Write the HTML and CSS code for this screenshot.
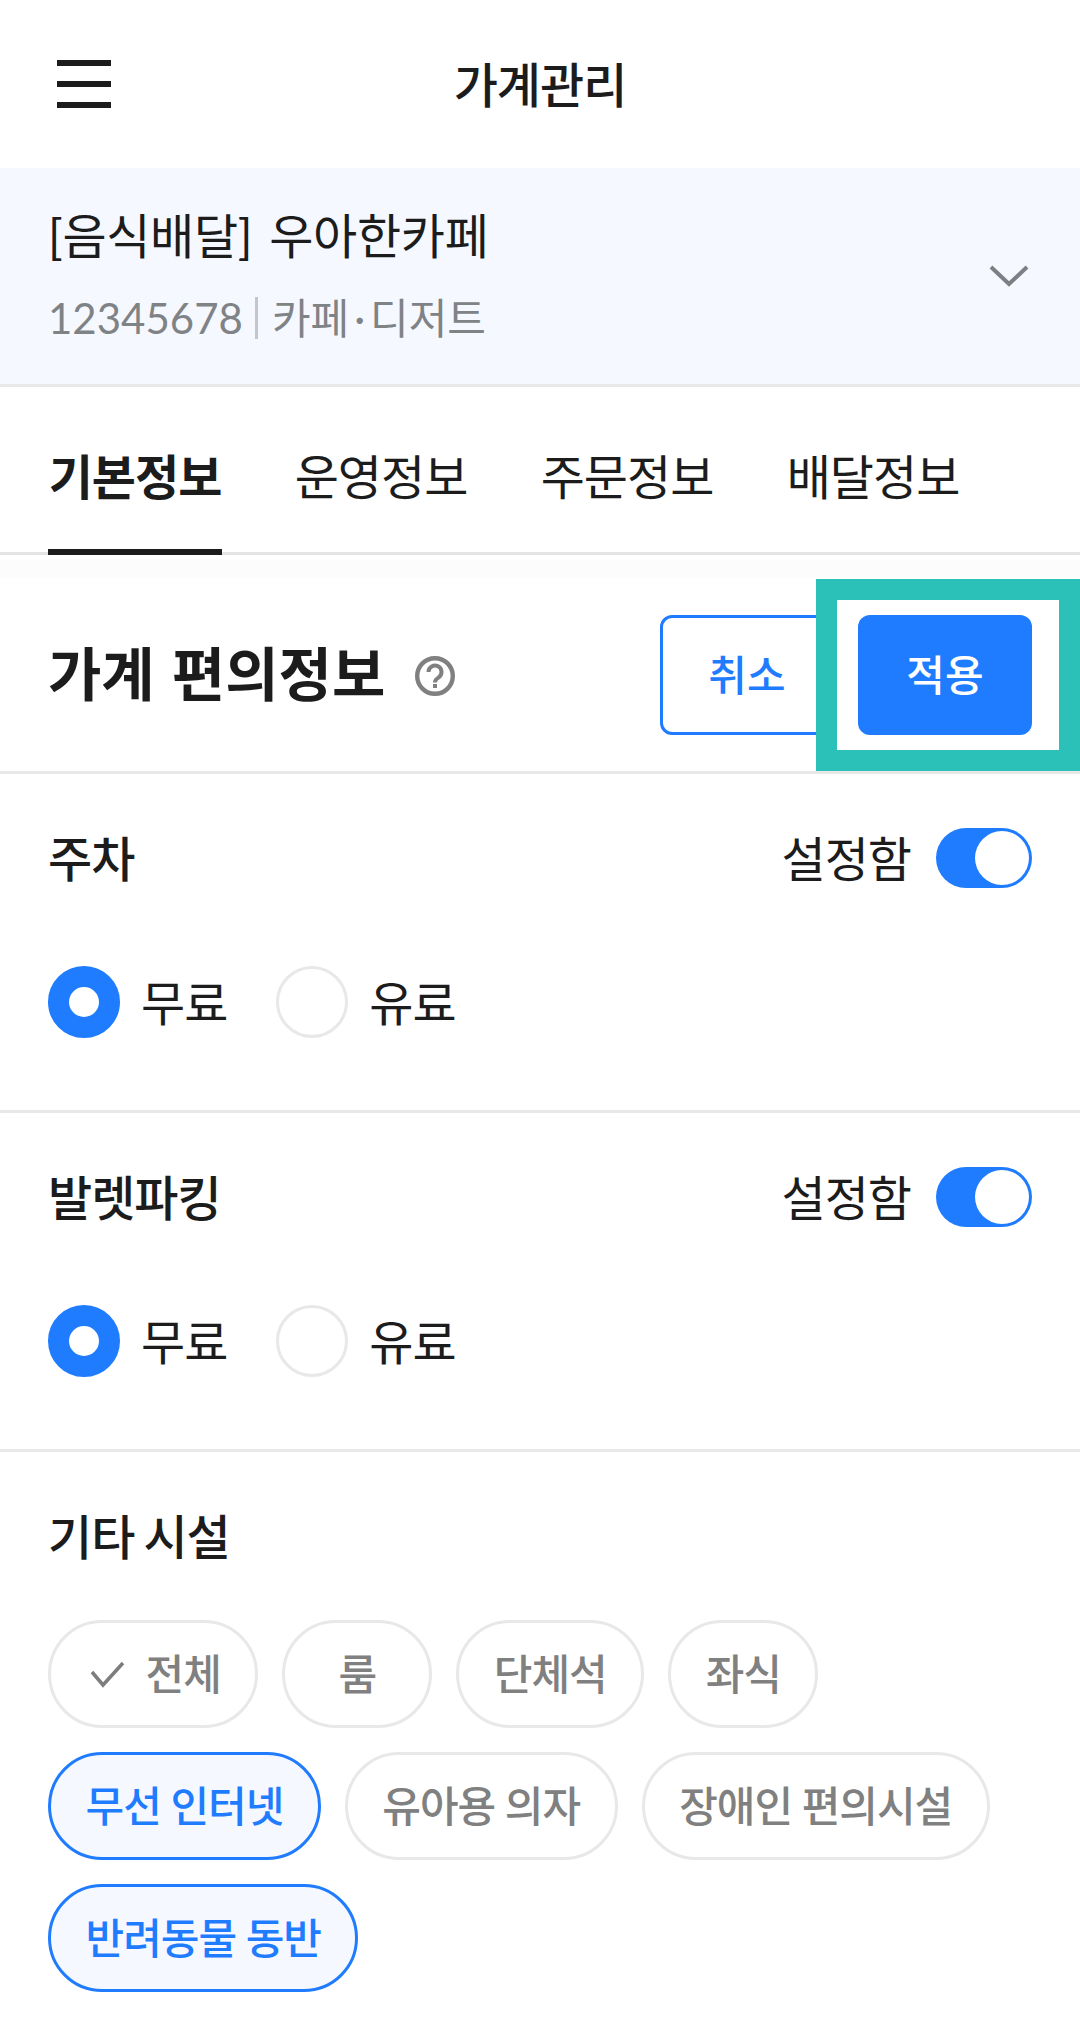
FILE: index.html
```html
<!DOCTYPE html>
<html lang="ko">
    <head>
        <meta charset="utf-8">
        <title>가계관리</title>
        <link rel="stylesheet" href="styles.css">
    </head>
    <body>
        <header class="app-header">
            <div class="menu-btn">
                <span class="menu-bar"></span>
                <span class="menu-bar"></span>
                <span class="menu-bar"></span>
            </div>
            <h1 class="app-title">가계관리</h1>
        </header>

        <div class="store-band">
            <div class="store-info">
                <div class="store-name">[음식배달] 우아한카페</div>
                <div class="store-meta">
                    <span>12345678</span>
                    <span class="meta-sep"></span>
                    <span>카페<span class="meta-dot">·</span>디저트</span>
                </div>
            </div>
            <svg class="store-chevron" width="40" height="22" viewBox="0 0 40 22">
                <path d="M2 2 L20 19 L38 2" fill="none" stroke="#7d7f82" stroke-width="4"/>
            </svg>
        </div>

        <nav class="tabs">
            <div class="tab tab-active">기본정보</div>
            <div class="tab">운영정보</div>
            <div class="tab">주문정보</div>
            <div class="tab">배달정보</div>
        </nav>
        <div class="tabs-shadow"></div>

        <div class="toolbar">
            <div class="toolbar-title">
                <h2>가계 편의정보</h2>
                <svg width="40" height="40" viewBox="0 0 40 40">
                    <circle cx="20" cy="20" r="17.800" fill="none" stroke="#808080" stroke-width="4.400"/>
                    <path d="M13.5 16 a6.5 6.5 0 1 1 10 5.5 c-2 1.300 -3.500 2.200 -3.500 5" fill="none" stroke="#808080" stroke-width="4"/>
                    <rect x="18" y="28" width="4" height="4" fill="#808080"/>
                </svg>
            </div>
            <div class="toolbar-btns">
                <button class="btn btn-line">취소</button>
                <button class="btn btn-solid">적용</button>
            </div>
            <div class="highlight"></div>
        </div>

        <section class="section">
            <div class="row">
                <div class="row-label">주차</div>
                <div class="setting">
                    <span class="lift">설정함</span>
                    <span class="toggle"><span class="toggle-knob"></span></span>
                </div>
            </div>
            <div class="radios">
                <div class="radio-item"><span class="radio radio-on"></span><span class="lift">무료</span></div>
                <div class="radio-item"><span class="radio"></span><span class="lift">유료</span></div>
            </div>
        </section>

        <section class="section">
            <div class="row">
                <div class="row-label">발렛파킹</div>
                <div class="setting">
                    <span class="lift">설정함</span>
                    <span class="toggle"><span class="toggle-knob"></span></span>
                </div>
            </div>
            <div class="radios">
                <div class="radio-item"><span class="radio radio-on"></span><span class="lift">무료</span></div>
                <div class="radio-item"><span class="radio"></span><span class="lift">유료</span></div>
            </div>
        </section>

        <section class="section section-last">
            <div class="row">
                <div class="row-label">기타 시설</div>
            </div>
            <div class="chips">
                <div class="chip">
                    <svg class="chip-check" width="36" height="28" viewBox="0 0 36 28">
                        <path d="M3 12 L14 25 L34 3" fill="none" stroke="#7d7d7d" stroke-width="3.500"/>
                    </svg>
                    전체
                </div>
                <div class="chip">룸</div>
                <div class="chip">단체석</div>
                <div class="chip">좌식</div>
                <div class="chip chip-on">무선 인터넷</div>
                <div class="chip">유아용 의자</div>
                <div class="chip">장애인 편의시설</div>
                <div class="chip chip-on">반려동물 동반</div>
            </div>
        </section>
    </body>
</html>
```
FILE: styles.css
```css
* {
    box-sizing: border-box;
}
body {
    margin: 0;
    background-color: white;
    color: #1c1c1c;
    font-family: "Lato", "Noto Sans CJK KR", sans-serif;
}
h1, h2 {
    margin: 0;
}
.lift {
    margin-top: -4px;
}

.app-header {
    display: grid;
    grid-template-columns: 1fr auto 1fr;
    align-items: center;
    height: 168px;
}
.menu-btn {
    display: flex;
    flex-direction: column;
    gap: 15px;
    width: 54px;
    margin-left: 57px;
}
.menu-bar {
    height: 6px;
    background-color: #1c1c1c;
}
.app-title {
    margin-bottom: 5px;
    font-size: 48px;
    font-weight: 500;
    letter-spacing: -1px;
}

.store-band {
    display: flex;
    justify-content: space-between;
    align-items: center;
    height: 219px;
    padding: 0 51px 0 48px;
    background-color: #f5f8ff;
    border-bottom: 3px solid #e8e8ea;
}
.store-info {
    margin-bottom: 5px;
}
.store-name {
    font-size: 48px;
    line-height: 66px;
    letter-spacing: -0.3px;
    word-spacing: 5px;
}
.store-meta {
    display: flex;
    align-items: center;
    margin-top: 22px;
    font-size: 42px;
    line-height: 54px;
    color: #808386;
}
.meta-sep {
    width: 3px;
    height: 42px;
    margin: 0 14px 0 12px;
    background-color: #c4c6c9;
}
.meta-dot {
    margin: 0 5px;
}

.tabs {
    display: flex;
    gap: 72px;
    height: 168px;
    padding: 0 48px;
    border-bottom: 3px solid #e4e4e4;
}
.tab {
    width: 174px;
    height: 168px;
    padding-top: 57px;
    font-size: 48px;
    line-height: 66px;
    letter-spacing: -1px;
    white-space: nowrap;
    text-align: center;
}
.tab-active {
    font-weight: 700;
    border-bottom: 6px solid #1c1c1c;
}
.tabs-shadow {
    height: 24px;
    background: linear-gradient(#ffffff 15%, #fcfcfc 20%, #fcfcfc 90%, #ffffff);
}

.toolbar {
    position: relative;
    display: flex;
    justify-content: space-between;
    align-items: center;
    height: 195px;
    padding: 36px 48px;
    border-bottom: 3px solid #e8e8e8;
}
.toolbar-title {
    display: flex;
    align-items: center;
    gap: 30px;
}
.toolbar-title h2 {
    margin-bottom: 8px;
    font-size: 58px;
    font-weight: 700;
    word-spacing: 3px;
}
.toolbar-title svg {
    margin-top: 2px;
}
.toolbar-btns {
    display: flex;
    gap: 24px;
}
.btn {
    width: 174px;
    height: 120px;
    padding: 0 0 5px;
    border-radius: 12px;
    font-family: inherit;
    font-size: 42px;
    font-weight: 500;
}
.btn-line {
    background-color: white;
    border: 3px solid #1f7cff;
    color: #1f7cff;
}
.btn-solid {
    background-color: #1f7cff;
    border: none;
    color: white;
}
.highlight {
    position: absolute;
    top: 0;
    right: 0;
    width: 264px;
    height: 192px;
    border: 21px solid #2cc1b8;
}

.section {
    padding: 54px 48px 72px;
    border-bottom: 3px solid #e8e8e8;
}
.section-last {
    padding-bottom: 48px;
    border-bottom: none;
}
.row {
    display: flex;
    justify-content: space-between;
    align-items: center;
    height: 60px;
}
.row-label {
    margin-top: -4px;
    font-size: 48px;
    font-weight: 500;
    letter-spacing: -1px;
    word-spacing: -2px;
}
.setting {
    display: flex;
    align-items: center;
    gap: 25px;
    font-size: 48px;
    letter-spacing: -1px;
}
.toggle {
    display: flex;
    justify-content: flex-end;
    align-items: center;
    width: 96px;
    height: 60px;
    padding-right: 3px;
    border-radius: 30px;
    background-color: #1f7cff;
}
.toggle-knob {
    width: 54px;
    height: 54px;
    border-radius: 50%;
    background-color: white;
}

.radios {
    display: flex;
    gap: 49px;
    margin-top: 78px;
}
.radio-item {
    display: flex;
    align-items: center;
    gap: 21px;
    font-size: 48px;
    letter-spacing: -1px;
}
.radio {
    width: 72px;
    height: 72px;
    border-radius: 50%;
    border: 3px solid #e8e8e8;
}
.radio-on {
    border: 21px solid #1f7cff;
}

.chips {
    display: flex;
    flex-wrap: wrap;
    gap: 24px;
    margin-top: 54px;
}
.chip {
    display: flex;
    justify-content: center;
    align-items: center;
    min-width: 150px;
    height: 108px;
    padding: 0 34.5px 6px;
    border: 3px solid #e8e8e8;
    border-radius: 54px;
    font-size: 42px;
    font-weight: 500;
    letter-spacing: -1px;
    color: #808080;
}
.chip-check {
    margin: 6px 21px 0 3px;
}
.chip-on {
    background-color: #f5f8ff;
    border-color: #1f7cff;
    color: #1f7cff;
}
```
